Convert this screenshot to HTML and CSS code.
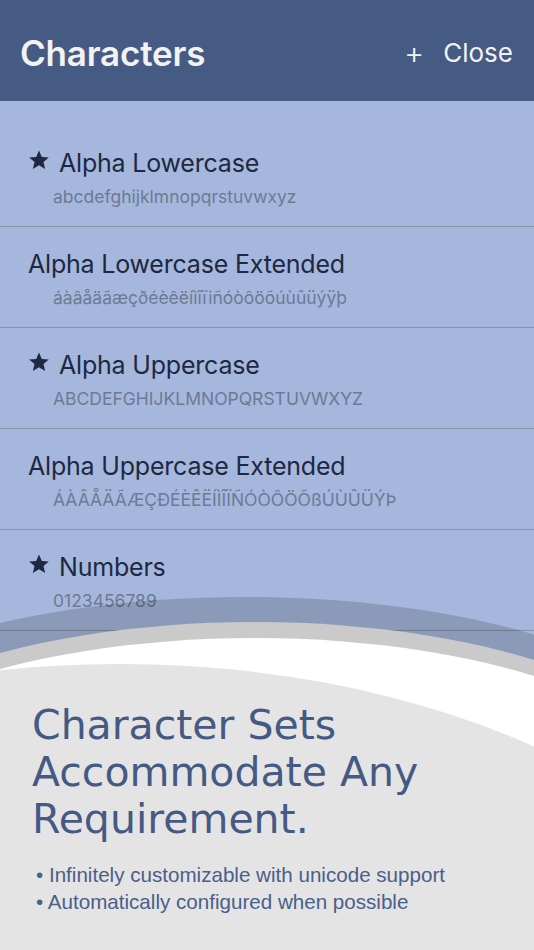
FILE: index.html
```html
<!DOCTYPE html>
<html>
<head>
<meta charset="utf-8">
<link rel="stylesheet" href="styles.css">
</head>
<body>
<div class="screen">
  <header class="nav">
    <h1 class="nav-title">Characters</h1>
    <div class="nav-actions">
      <span class="nav-plus">+</span>
      <span class="nav-close">Close</span>
    </div>
  </header>
  <ul class="list">
    <li class="row">
      <div class="row-title"><svg class="star" viewBox="0 0 24 24"><path d="M12 1.5l3.1 7.1 7.6.6-5.8 5 1.8 7.5L12 17.7l-6.7 4 1.8-7.5-5.8-5 7.6-.6z"/></svg><span>Alpha Lowercase</span></div>
      <div class="row-sub">abcdefghijklmnopqrstuvwxyz</div>
    </li>
    <li class="row">
      <div class="row-title"><span>Alpha Lowercase Extended</span></div>
      <div class="row-sub">áàâåäãæçðéèêëíìîïiñóòôöõúùûüýÿþ</div>
    </li>
    <li class="row">
      <div class="row-title"><svg class="star" viewBox="0 0 24 24"><path d="M12 1.5l3.1 7.1 7.6.6-5.8 5 1.8 7.5L12 17.7l-6.7 4 1.8-7.5-5.8-5 7.6-.6z"/></svg><span>Alpha Uppercase</span></div>
      <div class="row-sub">ABCDEFGHIJKLMNOPQRSTUVWXYZ</div>
    </li>
    <li class="row">
      <div class="row-title"><span>Alpha Uppercase Extended</span></div>
      <div class="row-sub">ÁÀÂÅÄÃÆÇÐÉÈÊËÍÌÎÏÑÓÒÔÖÕßÚÙÛÜÝÞ</div>
    </li>
    <li class="row">
      <div class="row-title"><svg class="star" viewBox="0 0 24 24"><path d="M12 1.5l3.1 7.1 7.6.6-5.8 5 1.8 7.5L12 17.7l-6.7 4 1.8-7.5-5.8-5 7.6-.6z"/></svg><span>Numbers</span></div>
      <div class="row-sub">0123456789</div>
    </li>
  </ul>
  <section class="promo">
    <svg class="promo-bg" viewBox="0 0 534 360" preserveAspectRatio="none">
      <ellipse cx="245" cy="168" rx="450" ry="161" fill="rgba(0,0,0,0.155)"/>
      <ellipse cx="255" cy="208" rx="450" ry="176" fill="#cacaca"/>
      <ellipse cx="255" cy="224" rx="450" ry="176" fill="#ffffff"/>
      <ellipse cx="120" cy="500" rx="700" ry="426" fill="#e4e4e4"/>
    </svg>
    <div class="promo-content">
      <h2 class="promo-title">Character Sets Accommodate Any Requirement.</h2>
      <ul class="promo-points">
        <li>• Infinitely customizable with unicode support</li>
        <li>• Automatically configured when possible</li>
      </ul>
    </div>
  </section>
</div>
</body>
</html>
```
FILE: styles.css
```css
html, body {
  margin: 0;
  padding: 0;
}
body {
  width: 534px;
  height: 950px;
  overflow: hidden;
  background: #a5b7dc;
  font-family: Inter, "Liberation Sans", sans-serif;
}
.screen {
  position: relative;
  width: 534px;
  height: 950px;
  overflow: hidden;
  background: #a5b7dc;
}
.nav {
  height: 101px;
  box-sizing: border-box;
  background: #465b84;
  display: flex;
  align-items: center;
  justify-content: space-between;
  padding: 4px 21px 0 20px;
  color: #f2f2f2;
}
.nav-title {
  margin: 0;
  font-size: 35px;
  font-weight: 600;
  letter-spacing: -0.2px;
}
.nav-actions {
  display: flex;
  align-items: center;
  gap: 19px;
  font-size: 26px;
}
.nav-plus {
  font-size: 31px;
  font-weight: 300;
}
.list {
  list-style: none;
  margin: 0;
  padding: 25px 0 0 0;
}
.row {
  border-bottom: 1px solid #8592ab;
  padding: 22px 0 0 28px;
  box-sizing: content-box;
  height: 78px;
}
.row-title {
  display: flex;
  align-items: center;
  gap: 9px;
  font-size: 25px;
  line-height: 30px;
  color: #1e2840;
  letter-spacing: -0.2px;
}
.star {
  width: 22px;
  height: 22px;
  fill: #1e2840;
  margin-top: -6px;
}
.row-sub {
  margin-top: 8px;
  padding-left: 25px;
  font-size: 17.5px;
  line-height: 22px;
  color: #6d7a95;
}
.promo {
  position: absolute;
  top: 590px;
  left: 0;
  right: 0;
  bottom: 0;
}
.promo-bg {
  position: absolute;
  left: 0;
  top: 0;
  width: 534px;
  height: 360px;
}
.promo-content {
  position: relative;
  padding: 112px 0 0 32px;
}
.promo-title {
  margin: 0;
  font-family: "DejaVu Sans", sans-serif;
  font-weight: normal;
  font-size: 41px;
  line-height: 47px;
  color: #445a85;
}
.promo-points {
  list-style: none;
  margin: 18px 0 0 0;
  padding: 0 0 0 4px;
  font-family: "Liberation Sans", Arial, sans-serif;
  font-size: 20.6px;
  line-height: 27px;
  color: #4a5f8a;
}
```
